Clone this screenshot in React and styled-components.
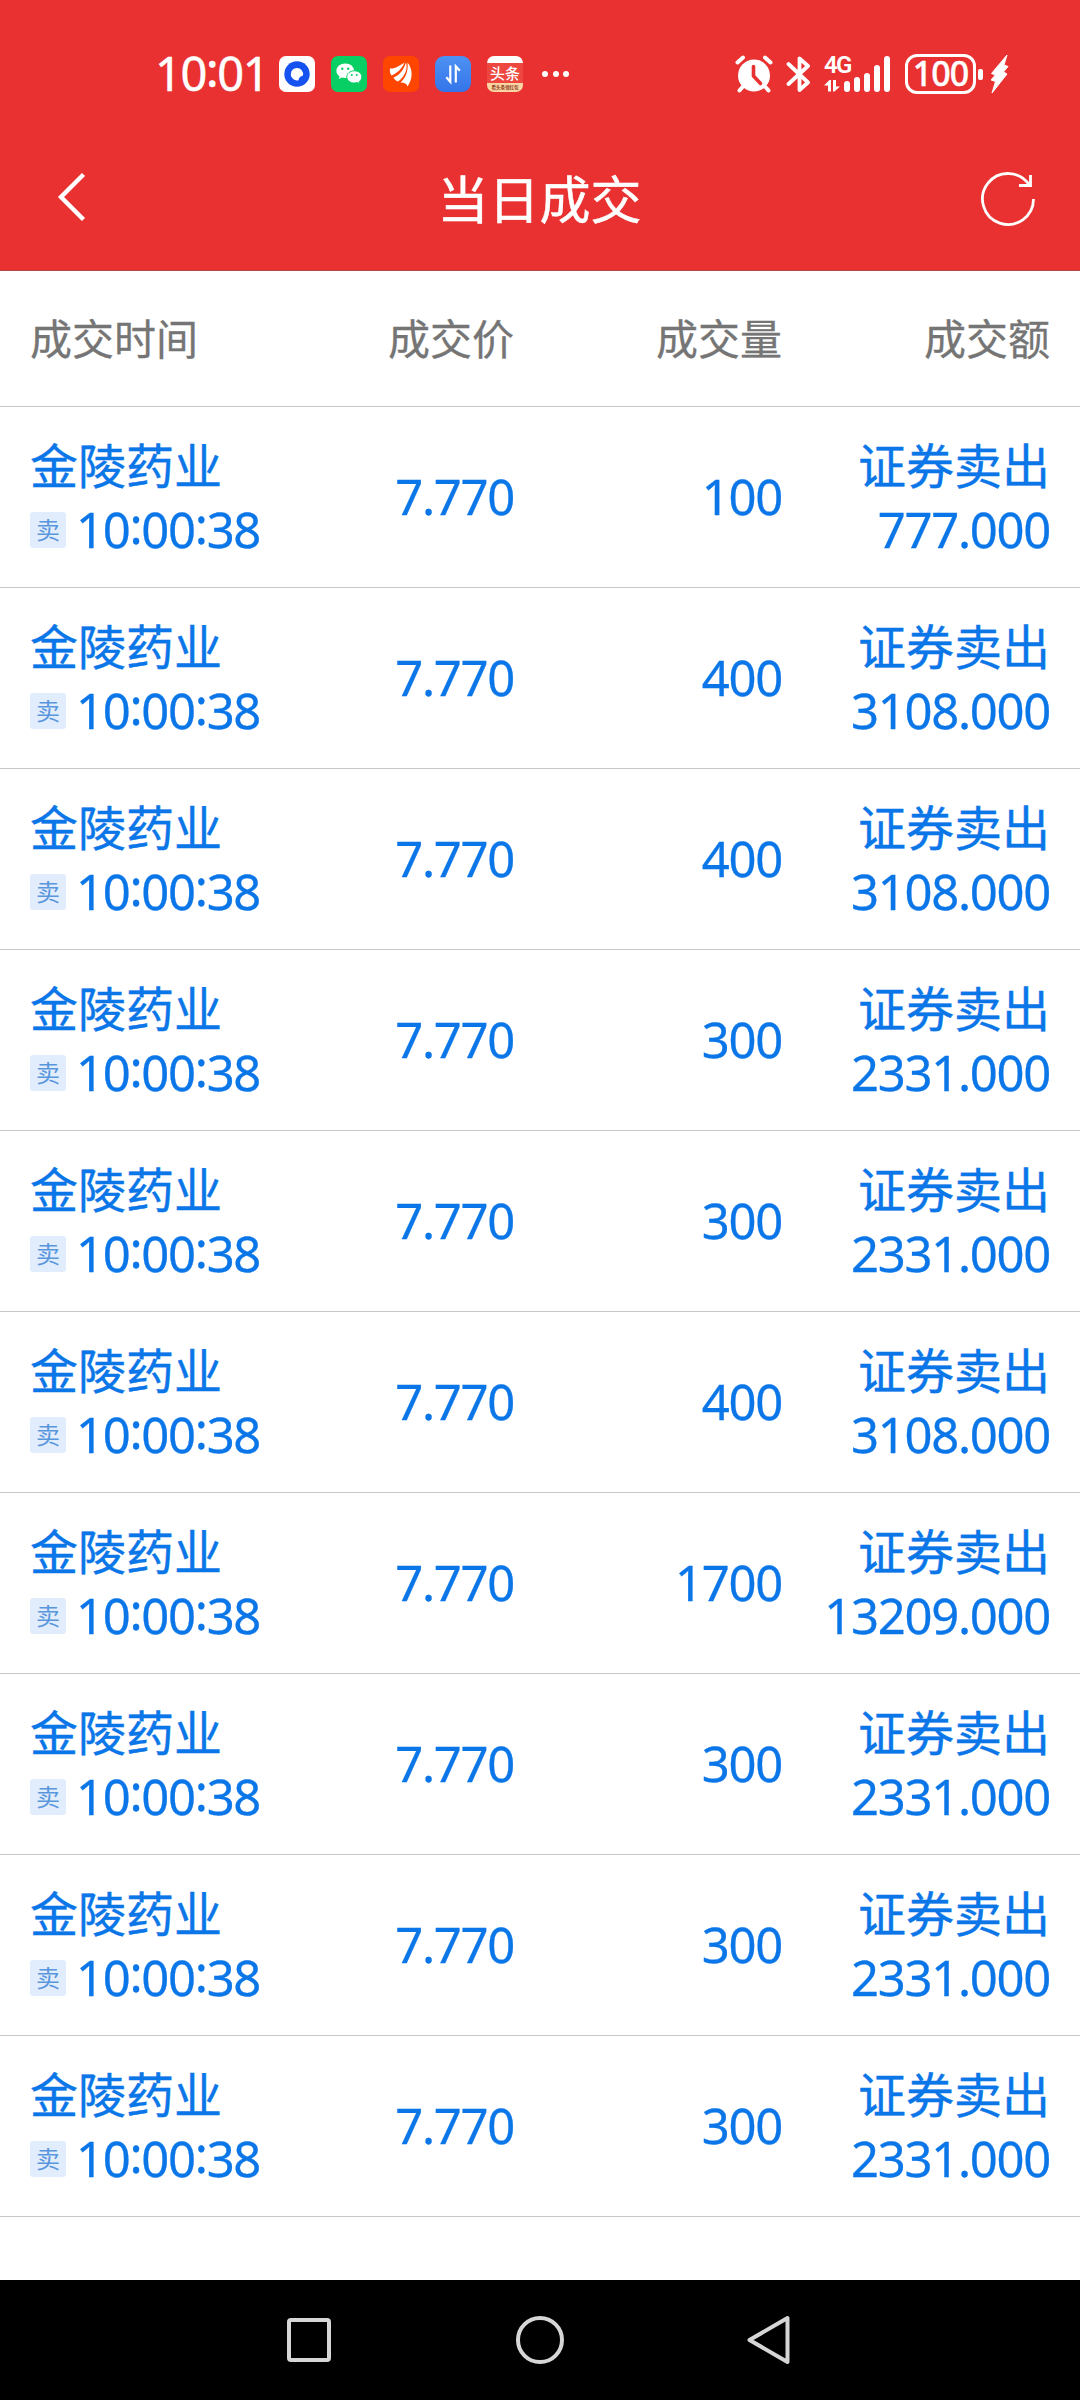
import React from "react";
import styled, { createGlobalStyle } from "styled-components";

const trades = [
  { volume: "100", amount: "777.000" },
  { volume: "400", amount: "3108.000" },
  { volume: "400", amount: "3108.000" },
  { volume: "300", amount: "2331.000" },
  { volume: "300", amount: "2331.000" },
  { volume: "400", amount: "3108.000" },
  { volume: "1700", amount: "13209.000" },
  { volume: "300", amount: "2331.000" },
  { volume: "300", amount: "2331.000" },
  { volume: "300", amount: "2331.000" },
];

function StatusBar() {
  return (
    <Status>
      <Clock>
        10<Colon>:</Colon>01
      </Clock>
      <Apps>
        <AppIcon $bg="#ffffff">
          <svg width="36" height="36" viewBox="0 0 36 36">
            <circle cx="18" cy="18" r="12.7" fill="#1552f0" />
            <path
              d="M18 12a6.2 6.2 0 1 0 1.5 12.2c.3-2.6 1.8-4.2 4.5-4.8A6.2 6.2 0 0 0 18 12z"
              fill="#fff"
            />
          </svg>
        </AppIcon>
        <AppIcon $bg="#07cf64">
          <svg width="36" height="36" viewBox="0 0 36 36">
            <path
              d="M14.3 7.5c-5 0-8.900 3.200-8.900 7.300 0 2.300 1.200 4.300 3.200 5.700l-.8 2.600 3-1.500c1 .3 2.200.5 3.500.5 4.900 0 8.800-3.200 8.800-7.300s-3.900-7.300-8.800-7.300z"
              fill="#fff"
            />
            <path
              d="M23.300 14.800c4.200 0 7.500 2.700 7.500 6.100 0 1.900-1 3.500-2.600 4.700l.6 2.100-2.500-1.200c-.9.300-1.900.5-3 .5-4.200 0-7.500-2.700-7.500-6.100s3.300-6.100 7.500-6.100z"
              fill="#fff"
              stroke="#07cf64"
              strokeWidth="1"
            />
            <g fill="#07cf64">
              <circle cx="11.3" cy="12.7" r="1.2" />
              <circle cx="17.2" cy="12.7" r="1.2" />
              <circle cx="20.8" cy="19" r="1" />
              <circle cx="25.8" cy="19" r="1" />
            </g>
          </svg>
        </AppIcon>
        <AppIcon $bg="#ff4600">
          <svg width="36" height="36" viewBox="0 0 36 36" fill="#fff">
            <path d="M7 12.500C12 13 16 10 21.500 6.500 19.500 12 14.500 17 8.500 19.500 7 17.500 6.500 15 7 12.500z" />
            <path d="M10.500 21.500C16.500 19 20.500 14 23 6.500 25.200 13 21.500 21 15 25.500 13 25 11.500 23.500 10.500 21.500z" />
            <path d="M17.500 26.500C22.500 22 25.500 15.500 24.500 6.500 30 13 30 23 24.500 30.500 24 28 21.500 26.500 17.500 26.500z" />
          </svg>
        </AppIcon>
        <AppIcon $bg="linear-gradient(#4d92f3, #3474ea)" $radius="9px">
          <svg
            width="36"
            height="36"
            viewBox="0 0 36 36"
            fill="none"
            stroke="#fff"
            strokeWidth="2.2"
          >
            <path d="M15.300 9.500v16.300l-4-4.500M20.800 26.500V10.300l4 4.500" />
          </svg>
        </AppIcon>
        <News>
          <NewsTitle>头条</NewsTitle>
          <NewsFoot>看头条领红包</NewsFoot>
        </News>
      </Apps>
      <More>
        <i />
        <i />
        <i />
      </More>
      <System>
        <svg width="38" height="38" viewBox="0 0 38 38">
          <circle cx="19" cy="20.5" r="16" fill="#fff" />
          <path
            d="M2.500 7.500 8 2.500M35.500 7.500 30 2.500M7.500 32l-3 3.500M30.500 32l3 3.500"
            stroke="#fff"
            strokeWidth="4"
            strokeLinecap="round"
          />
          <path
            d="M18.500 11.500v9.500l7 7.500"
            stroke="#e83130"
            strokeWidth="3.6"
            strokeLinecap="round"
            strokeLinejoin="round"
            fill="none"
          />
        </svg>
        <Bluetooth width="25" height="38" viewBox="0 0 25 38">
          <path
            d="M2.500 9 22 27.500 13.500 35V3.500L22 11 2.500 29"
            stroke="#fff"
            strokeWidth="3.8"
            strokeLinecap="round"
            strokeLinejoin="round"
            fill="none"
          />
        </Bluetooth>
        <Signal>
          <Network>
            <span>4G</span>
            <svg width="17" height="12" viewBox="0 0 17 12" fill="#fff">
              <path d="M0 5.500 5.500 0H7v11.500H4V5.500zM9 0h3v6.500h4L10.500 11.500H9z" />
            </svg>
          </Network>
          <Bars>
            {[11, 15, 19, 27, 36].map((h) => (
              <Bar key={h} style={{ height: h }} />
            ))}
          </Bars>
        </Signal>
        <Battery>100</Battery>
        <Nub />
        <Bolt width="19" height="40" viewBox="0 0 19 40">
          <path
            d="M17 1 1.500 19.500l3.800 1.500L1 26l4.500 1.500L2 39 17 20l-3.500-2L18 12.500 14 11z"
            fill="#fff"
            stroke="#fff"
            strokeLinejoin="round"
          />
        </Bolt>
      </System>
    </Status>
  );
}

function App() {
  return (
    <Screen>
      <GlobalStyle />
      <StatusBar />
      <TitleBar>
        <svg width="30" height="50" viewBox="0 0 30 50">
          <path
            d="M26.500 2.500 4 25l22.500 22.500"
            fill="none"
            stroke="#fff"
            strokeWidth="4.4"
          />
        </svg>
        <h1>当日成交</h1>
        <Refresh width="56" height="56" viewBox="0 0 56 56">
          <path d="M53.500 28A25.500 25.500 0 1 1 49.500 14.300" />
          <path d="M50.500 4v10.500H39" />
        </Refresh>
      </TitleBar>
      <Columns>
        <span>成交时间</span>
        <span>成交价</span>
        <span>成交量</span>
        <span>成交额</span>
      </Columns>
      <List>
        {trades.map((trade, index) => (
          <Trade key={index}>
            <Cell>
              <Name>金陵药业</Name>
              <Time>
                <Tag>卖</Tag>
                <Num>
                  10<Colon>:</Colon>00<Colon>:</Colon>38
                </Num>
              </Time>
            </Cell>
            <Num>7.770</Num>
            <Num>{trade.volume}</Num>
            <Cell>
              <Name>证券卖出</Name>
              <Num>{trade.amount}</Num>
            </Cell>
          </Trade>
        ))}
      </List>
      <NavBar>
        <svg width="50" height="50" viewBox="0 0 50 50">
          <rect x="5" y="5" width="40" height="40" rx="2" />
        </svg>
        <svg width="50" height="50" viewBox="0 0 50 50">
          <circle cx="26" cy="25" r="22" />
        </svg>
        <svg width="50" height="50" viewBox="0 0 50 50">
          <path d="M43.500 3v44L5.500 25z" />
        </svg>
      </NavBar>
    </Screen>
  );
}

const GlobalStyle = createGlobalStyle`
  body {
    margin: 0;
    background: #ffffff;
  }
`;

const Screen = styled.div`
  box-sizing: border-box;
  display: flex;
  flex-direction: column;
  width: 1080px;
  height: 2400px;
  overflow: hidden;
  font-family: "Noto Sans", "Noto Sans CJK SC", sans-serif;
  background: #ffffff;
`;

const Status = styled.div`
  box-sizing: border-box;
  display: flex;
  align-items: center;
  height: 128px;
  padding: 20px 71px 0 155px;
  color: #ffffff;
  background: #e83130;
`;

const Clock = styled.div`
  width: 124px;
  padding-bottom: 2px;
  font-size: 47px;
  line-height: 60px;
  letter-spacing: -1.4px;
  -webkit-text-stroke: 0.5px currentColor;
`;

/* lifted so the dots sit in the middle of the digits */
const Colon = styled.span`
  line-height: 0;
  vertical-align: 4px;
`;

const Apps = styled.div`
  display: flex;
  gap: 16px;
`;

const AppIcon = styled.div`
  width: 36px;
  height: 36px;
  border-radius: ${(props) => props.$radius || "7px"};
  overflow: hidden;
  background: ${(props) => props.$bg};

  svg {
    display: block;
  }
`;

const News = styled(AppIcon)`
  display: flex;
  flex-direction: column;
  align-items: center;
  padding-top: 7px;
  height: 29px;
  font-family: "Noto Sans CJK SC", sans-serif;
  white-space: nowrap;
  background: linear-gradient(#fff 7px, #ee4740 7px, #ee4740 27px, #fbd6a4 27px);
`;

const NewsTitle = styled.div`
  height: 20px;
  font-size: 15px;
  font-weight: 500;
  line-height: 20px;
`;

const NewsFoot = styled.div`
  font-size: 4.5px;
  font-weight: 700;
  line-height: 9px;
  color: #8a3a1c;
`;

const More = styled.div`
  display: flex;
  gap: 4.5px;
  margin-left: 19px;

  i {
    width: 6px;
    height: 6px;
    border-radius: 50%;
    background: #ffffff;
  }
`;

const System = styled.div`
  display: flex;
  align-items: center;
  margin-left: auto;
`;

const Bluetooth = styled.svg`
  margin-left: 13px;
`;

const Signal = styled.div`
  display: flex;
  margin-left: 13px;
  height: 36px;
`;

const Network = styled.div`
  display: flex;
  flex-direction: column;
  justify-content: space-between;
  width: 20px;

  span {
    font-family: Roboto, sans-serif;
    font-size: 24px;
    font-weight: 600;
    line-height: 19px;
    letter-spacing: -1.8px;
  }
`;

const Bars = styled.div`
  display: flex;
  align-items: flex-end;
  gap: 4px;
`;

const Bar = styled.div`
  width: 6px;
  border-radius: 3px;
  background: #ffffff;
`;

const Battery = styled.div`
  box-sizing: border-box;
  width: 71px;
  height: 40px;
  margin-left: 15px;
  border: 3px solid #ffffff;
  border-radius: 12px;
  font-size: 34px;
  font-weight: 500;
  line-height: 33px;
  text-align: center;
  letter-spacing: -1px;
  -webkit-text-stroke: 0.4px currentColor;
`;

const Nub = styled.div`
  width: 5px;
  height: 11px;
  margin-left: 2px;
  border-radius: 2px;
  background: #ffffff;
`;

const Bolt = styled.svg`
  margin-left: 7px;
`;

const TitleBar = styled.div`
  box-sizing: border-box;
  display: flex;
  align-items: center;
  justify-content: space-between;
  height: 143px;
  padding: 0 44px 4px 57px;
  border-bottom: 1px solid #b84747;
  color: #ffffff;
  background: #e83130;

  h1 {
    margin: 0 0 0 12px;
    font-family: "Noto Sans CJK SC", sans-serif;
    font-size: 51px;
    font-weight: 400;
    line-height: 60px;
    -webkit-text-stroke: 0.5px currentColor;
  }
`;

const Refresh = styled.svg`
  margin-top: 4px;
  fill: none;
  stroke: #ffffff;
  stroke-width: 2.8;
`;

const Grid = styled.div`
  box-sizing: border-box;
  display: grid;
  grid-template-columns: 216px repeat(3, 268px);
  align-items: center;
  padding: 0 30px;
  border-bottom: 1px solid #c8c8c8;
  text-align: right;
  white-space: nowrap;

  > :first-child {
    text-align: left;
  }
`;

const Columns = styled(Grid)`
  height: 136px;
  padding-bottom: 5px;
  font-family: "Noto Sans CJK SC", sans-serif;
  font-size: 42px;
  color: #757575;
  -webkit-text-stroke: 0.3px currentColor;
`;

const List = styled.div`
  flex: 1;
`;

const Trade = styled(Grid)`
  height: 181px;
  padding-bottom: 2px;
  color: #0b76e8;
`;

const Cell = styled.div`
  display: flex;
  flex-direction: column;
`;

const Name = styled.div`
  padding-bottom: 1px;
  font-family: "Noto Sans CJK SC", sans-serif;
  font-size: 48px;
  line-height: 65px;
  -webkit-text-stroke: 0.4px currentColor;
`;

const Num = styled.div`
  font-size: 49px;
  line-height: 65px;
  letter-spacing: -1.3px;
  -webkit-text-stroke: 0.3px currentColor;
`;

const Time = styled.div`
  display: flex;
  align-items: center;
  gap: 10px;
`;

const Tag = styled.div`
  flex: none;
  width: 36px;
  height: 36px;
  margin-top: 1px;
  border-radius: 3px;
  font-family: "Noto Sans CJK SC", sans-serif;
  font-size: 24px;
  line-height: 34px;
  text-align: center;
  color: #5a96dc;
  background: #e1edfc;
`;

const NavBar = styled.div`
  display: flex;
  align-items: center;
  justify-content: space-between;
  height: 120px;
  padding: 0 286px 0 284px;
  background: #000000;

  svg {
    fill: none;
    stroke: #d6d6d6;
    stroke-width: 4;
    stroke-linejoin: round;
  }
`;

export default App;
